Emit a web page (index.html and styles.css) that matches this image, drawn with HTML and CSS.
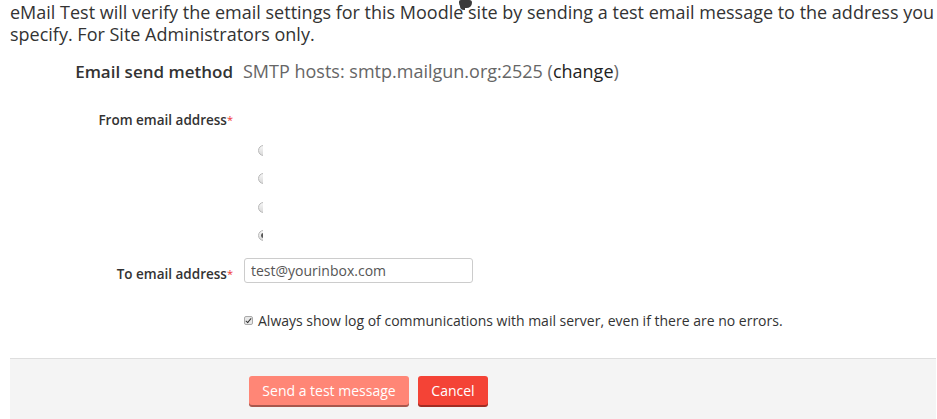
FILE: index.html
```html
<!DOCTYPE html>
<html lang="en">
<head>
<meta charset="utf-8">
<title>eMail Test</title>
<link rel="stylesheet" href="styles.css">
</head>
<body>
<div class="page">
  <p class="intro">eMail Test will verify the email settings for this Moodle site by sending a test email message to the address you specify. For Site Administrators only.</p>
  <span class="blob"></span>

  <div class="method">
    <span class="method-label">Email send method</span>
    <span class="method-value">SMTP hosts: smtp.mailgun.org:2525 (<a href="#" class="change">change</a>)</span>
  </div>

  <form class="form">
    <div class="row row-from">
      <label class="label">From email address<span class="req">*</span></label>
      <div class="field radios">
        <span class="radio"></span>
        <span class="radio"></span>
        <span class="radio"></span>
        <span class="radio checked"></span>
      </div>
    </div>

    <div class="row row-to">
      <label class="label">To email address<span class="req">*</span></label>
      <div class="field">
        <input class="text" type="text" value="test@yourinbox.com">
      </div>
    </div>

    <div class="row row-check">
      <div class="label"></div>
      <div class="field check">
        <span class="checkbox"></span>
        <span class="check-text">Always show log of communications with mail server, even if there are no errors.</span>
      </div>
    </div>

    <div class="actions">
      <button type="button" class="btn btn-send">Send a test message</button>
      <button type="button" class="btn btn-cancel">Cancel</button>
    </div>
  </form>
</div>
</body>
</html>
```
FILE: styles.css
```css
html, body {
  margin: 0;
  padding: 0;
  background: #fff;
}
body {
  font-family: "Open Sans", "DejaVu Sans", sans-serif;
  color: #333;
}
.page {
  position: relative;
  padding: 0 1px 0 10px;
}
.intro {
  margin: 0;
  padding-top: 1px;
  font-size: 18px;
  line-height: 22px;
  color: #333;
}
.blob {
  position: absolute;
  left: 459px;
  top: 0;
  width: 13px;
  height: 8px;
  background: #3a3a3a;
  border-radius: 2px 3px 6px 6px;
}
.blob::after {
  content: "";
  position: absolute;
  left: 1px;
  top: 5px;
  width: 5px;
  height: 5px;
  background: #3a3a3a;
  border-radius: 0 0 0 4px;
}
.method {
  display: flex;
  align-items: baseline;
  margin-top: 15px;
  height: 22px;
  line-height: 22px;
}
.method-label {
  width: 223px;
  flex: none;
  text-align: right;
  font-weight: 600;
  font-size: 17px;
  color: #333;
}
.method-value {
  margin-left: 10px;
  font-size: 18px;
  color: #666;
}
.change {
  color: #222;
  text-decoration: none;
}
.form {
  margin: 0;
}
.row {
  display: flex;
  align-items: flex-start;
}
.label {
  width: 223px;
  flex: none;
  text-align: right;
  font-size: 13.5px;
  line-height: 20px;
  font-weight: 600;
  color: #333;
}
.req {
  color: #e33;
  font-size: 11px;
  font-weight: 400;
  vertical-align: 1px;
}
.field {
  margin-left: 11px;
}
.row-from {
  margin-top: 28px;
}
.radios {
  display: flex;
  flex-direction: column;
  gap: 17.5px;
  width: 5px;
  padding-top: 34.5px;
  padding-left: 14px;
  overflow: hidden;
}
.radio {
  display: block;
  width: 11px;
  height: 11px;
  flex: none;
  border-radius: 50%;
  border: 1px solid #b8b8b8;
  background: linear-gradient(#f6f6f6, #dadada);
  box-sizing: border-box;
  position: relative;
}
.radio.checked::after {
  content: "";
  position: absolute;
  left: 2px;
  top: 2px;
  width: 5px;
  height: 5px;
  border-radius: 50%;
  background: #555;
}
.row-to {
  margin-top: 17px;
}
.row-to .label {
  padding-top: 6px;
}
.text {
  display: block;
  width: 229px;
  height: 25px;
  box-sizing: border-box;
  border: 1px solid #ccc;
  border-radius: 3px;
  padding: 0 6px;
  font-family: "Open Sans", "DejaVu Sans", sans-serif;
  font-size: 14px;
  color: #555;
  background: #fff;
  outline: none;
  margin: 0;
}
.row-check {
  margin-top: 27px;
}
.check {
  display: flex;
  align-items: center;
  gap: 5px;
  font-size: 14px;
  line-height: 20px;
  color: #333;
}
.checkbox {
  width: 9px;
  height: 9px;
  border: 1px solid #aaa;
  border-radius: 2px;
  background: #e8e8e8;
  position: relative;
  box-sizing: border-box;
  margin-top: -1px;
}
.checkbox::after {
  content: "";
  position: absolute;
  left: 2px;
  top: 0;
  width: 2px;
  height: 5px;
  border: solid #333;
  border-width: 0 1.5px 1.5px 0;
  transform: rotate(40deg);
}
.actions {
  margin-top: 27px;
  border-top: 1px solid #dedede;
  background: #f4f4f4;
  padding: 17px 0 20px 239px;
  display: flex;
  gap: 9px;
}
.btn {
  font-family: "Open Sans", "DejaVu Sans", sans-serif;
  font-size: 14px;
  color: #fff;
  border: none;
  border-radius: 3px;
  height: 29px;
  padding: 0 12px;
  cursor: pointer;
}
.btn-send {
  background: #ff8676;
  box-shadow: 0 2px 0 #a8574d;
  width: 160px;
}
.btn-cancel {
  background: #f44336;
  box-shadow: 0 2px 0 #a12c23;
  width: 70px;
}
```
